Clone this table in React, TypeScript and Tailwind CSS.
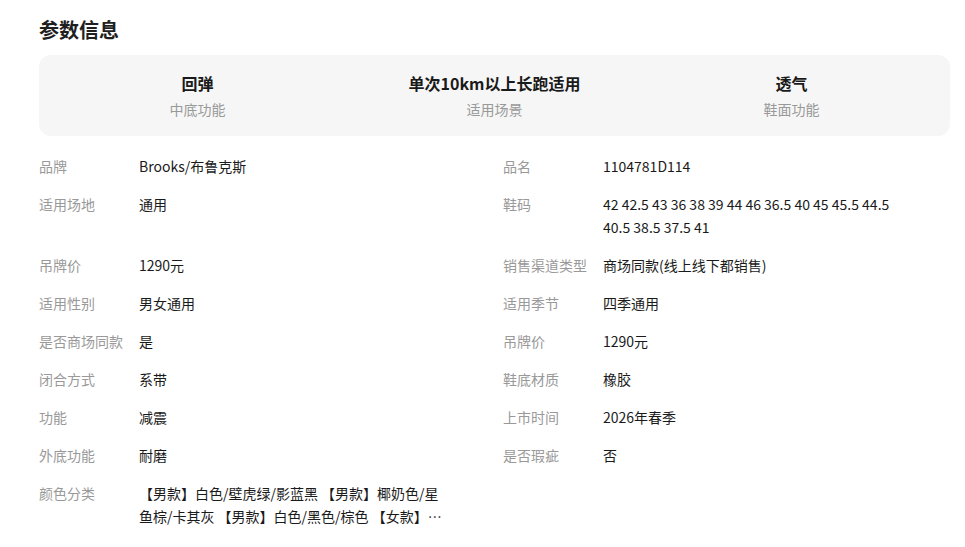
const highlights = [
  { value: '回弹', label: '中底功能' },
  { value: '单次10km以上长跑适用', label: '适用场景' },
  { value: '透气', label: '鞋面功能' },
]

const rows: [string, string, string?, string?][] = [
  ['品牌', 'Brooks/布鲁克斯', '品名', '1104781D114'],
  ['适用场地', '通用', '鞋码', '42 42.5 43 36 38 39 44 46 36.5 40 45 45.5 44.5 40.5 38.5 37.5 41'],
  ['吊牌价', '1290元', '销售渠道类型', '商场同款(线上线下都销售)'],
  ['适用性别', '男女通用', '适用季节', '四季通用'],
  ['是否商场同款', '是', '吊牌价', '1290元'],
  ['闭合方式', '系带', '鞋底材质', '橡胶'],
  ['功能', '减震', '上市时间', '2026年春季'],
  ['外底功能', '耐磨', '是否瑕疵', '否'],
  ['颜色分类', '【男款】白色/壁虎绿/影蓝黑 【男款】椰奶色/星鱼棕/卡其灰 【男款】白色/黑色/棕色 【女款】白色/粉色/蓝色'],
]

function Cell({ label, value }: { label?: string; value?: string }) {
  if (!label) return <div />
  return (
    <div className="flex text-[14px] leading-[23px]">
      <div className="w-[100px] shrink-0 text-[#999999]">{label}</div>
      <div className="w-[312px] text-[#1a1a1a] line-clamp-2 pb-[1px]">{value}</div>
    </div>
  )
}

export default function App() {
  return (
    <main
      className="min-h-screen bg-white px-[39px] pt-4"
      style={{ fontFamily: '"Noto Sans CJK SC", "Noto Sans", sans-serif' }}
    >
      <h2 className="text-[20px] leading-7 font-bold text-[#1f1f1f] mb-[11px]">参数信息</h2>

      <div className="w-[911px] bg-[#f6f6f6] rounded-xl px-[10px] pt-4 pb-[17px] grid grid-cols-3">
        {highlights.map((h) => (
          <div key={h.label} className="flex flex-col items-center">
            <div className="text-[16px] leading-6 font-bold text-[#1a1a1a]">{h.value}</div>
            <div className="text-[14px] leading-5 text-[#999999] mt-[4px]">{h.label}</div>
          </div>
        ))}
      </div>

      <div className="mt-[19px] grid grid-cols-[464px_1fr] gap-y-[14px]">
        {rows.map((r, i) => (
          <div key={i} className="contents">
            <Cell label={r[0]} value={r[1]} />
            <Cell label={r[2]} value={r[3]} />
          </div>
        ))}
      </div>
    </main>
  )
}
